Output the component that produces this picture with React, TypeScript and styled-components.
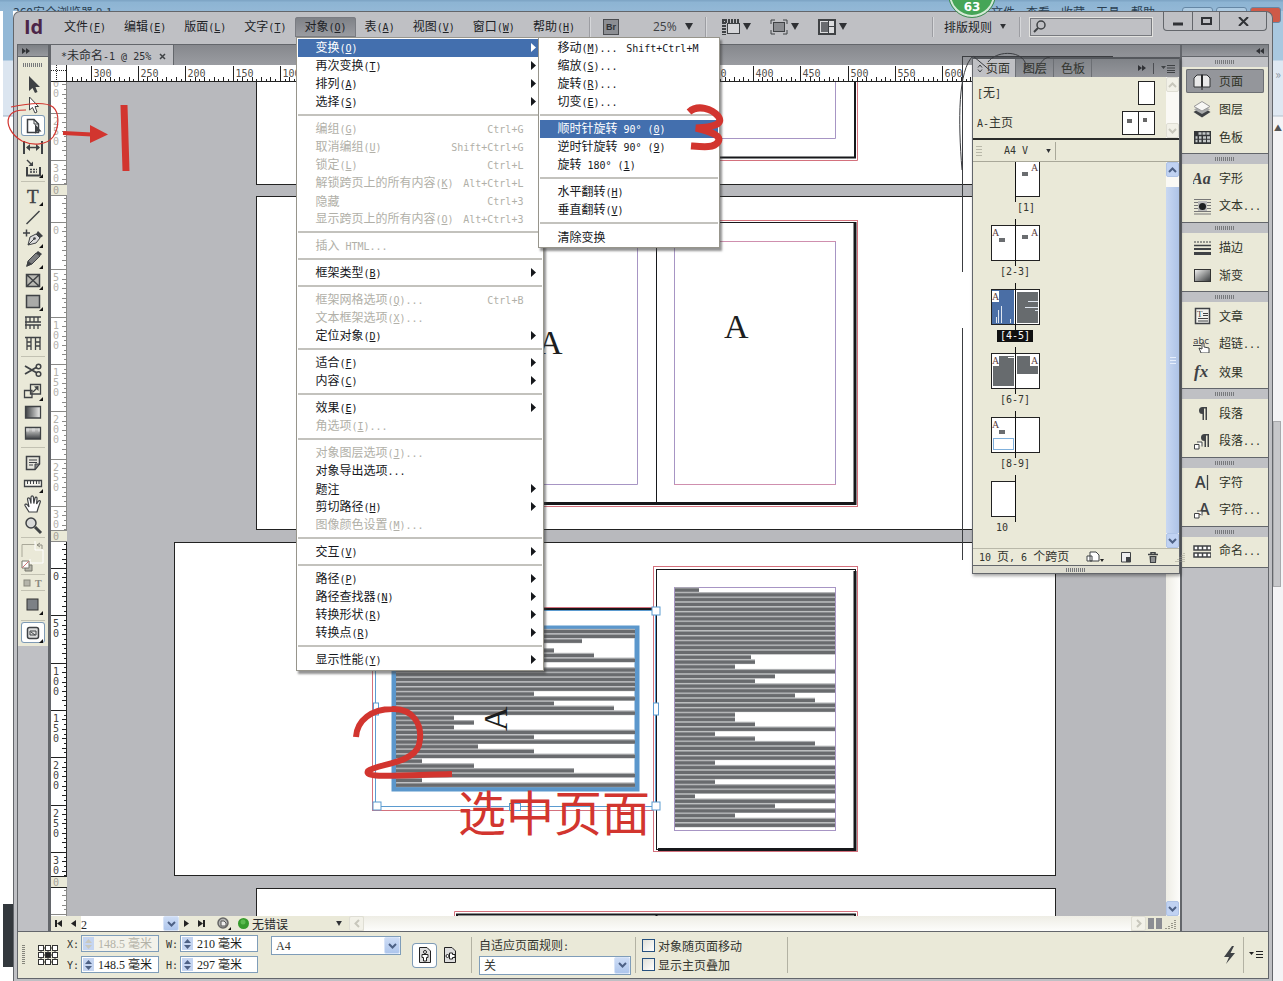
import React from "react";
import styled, { createGlobalStyle, css } from "styled-components";

const INK = "#26282b";
const FRAME = "#bfc0c4";
const CREAM = "#eae9d8";
const LINE = "#63666b";
const PASTE = "#b8b9bd";
const BLUE = "#436fae";
const RED = "#d2352f";
const MONO = '"DejaVu Sans Mono", "Liberation Mono", monospace';
const SANS = '"Noto Sans CJK SC", "Liberation Sans", sans-serif';
const FIELD = '"Liberation Serif", "Noto Sans CJK SC", serif';

const Global = createGlobalStyle`
  *, *::before, *::after { box-sizing: border-box; }
  body { margin: 0; background: #fff; color: ${INK}; font: 12px/18px ${SANS}; }
  button, input, select { font: inherit; color: inherit; margin: 0; padding: 0; border: 0; background: none; border-radius: 0; }
  svg { display: block; flex: none; }
`;

/* ---------- text ---------- */

const Latin = styled.span`
  font-family: ${MONO};
  font-size: 10px;
  white-space: pre;
`;
const Key = styled.u`
  text-underline-offset: 1px;
`;

function Mixed({ text, keys = false }: { text: string; keys?: boolean }) {
  return (
    <>
      {text.split(/([\x20-\x7e°]+)/).map((run, i) => {
        if (i % 2 === 0) return run;
        const m = keys ? run.match(/^(.*\()(.)(\).*)$/) : null;
        return <Latin key={i}>{m ? <>{m[1]}<Key>{m[2]}</Key>{m[3]}</> : run}</Latin>;
      })}
    </>
  );
}

/* ---------- window shell ---------- */

const Desktop = styled.div`
  position: relative;
  min-height: 100vh;
  display: flex;
  flex-direction: column;
  overflow: hidden;
`;
const BackTitle = styled.div`
  height: 11px;
  padding: 4px 128px 0 13px;
  display: flex;
  justify-content: space-between;
  background: linear-gradient(#7fa6c6 0 1px, #8db4d3 2px, #93b8d6);
  overflow: hidden;
  color: #2a3f52;
  line-height: 16px;
`;
const BackMenu = styled.div`
  display: flex;
  gap: 11px;
`;
const BackButtons = styled.div`
  position: absolute;
  top: 7px;
  right: 2px;
  display: flex;
  gap: 3px;
`;
const BackButton = styled.i<{ $close?: boolean }>`
  width: 31px;
  height: 16px;
  border: 1px solid #6587a5;
  border-radius: 3px;
  background: ${(p) => (p.$close ? "#cf5a48" : "#aecbe2")};
`;
const Middle = styled.div`
  flex: 1;
  display: flex;
`;
const EdgeLeft = styled.div`
  width: 13px;
  border-left: 3px solid #fff;
  display: flex;
  flex-direction: column;
  background: linear-gradient(#93b8d6 0 49px, #dbe5f0 50px 104px, #9eb1c5 105px, #fff 106px);
  justify-content: flex-end;
`;
const EdgeDark = styled.div`
  height: 63px;
  margin-bottom: 14px;
  background: #33383d;
`;
const EdgeRight = styled.div`
  width: 10px;
  display: flex;
  flex-direction: column;
  align-items: center;
  background: linear-gradient(#a9c8e0 0 49px, #dfe8f2 50px 104px, #b4c0cc 105px, #f4f4f6 106px);
  padding-top: 54px;
  color: #8c96a2;
`;
const EdgeMore = styled.span`
  height: 18px;
  margin-bottom: 36px;
`;
const EdgeArrow = styled.span`
  height: 18px;
  color: #555;
  font-size: 8px;
`;
const EdgeThumb = styled.span`
  width: 8px;
  height: 166px;
  margin-top: 284px;
  align-self: flex-start;
  border: 1px solid #a8a9ac;
  background: #c6c7ca;
`;
const Badge = styled.div`
  position: absolute;
  z-index: 9;
  left: 949px;
  top: -29px;
  width: 46px;
  height: 46px;
  padding-bottom: 1px;
  display: flex;
  align-items: flex-end;
  justify-content: center;
  border-radius: 50%;
  border: 2px solid #d5ead6;
  outline: 1px solid #3f8f52;
  background: #45a557;
  color: #fff;
  font: bold 12px/14px "DejaVu Sans", sans-serif;
`;
const Shell = styled.div`
  position: relative;
  flex: 1;
  min-width: 0;
  display: flex;
  flex-direction: column;
  padding: 0 3px 2px;
  border: 1px solid ${LINE};
  border-bottom: 0;
  border-radius: 7px 7px 0 0;
  background: ${FRAME};
`;

/* ---------- menu bar ---------- */

const MenuBar = styled.header`
  height: 32px;
  display: flex;
  align-items: center;
  padding-bottom: 3px;
  color: #202226;
`;
const Logo = styled.div`
  width: 38px;
  padding-left: 7px;
  color: #4c2548;
  font: bold 20px/20px "Open Sans", sans-serif;
`;
const MenuNav = styled.nav`
  display: flex;
  margin-right: 5px;
`;
const MenuSlot = styled.div`
  position: relative;
`;
const MenuTop = styled.button<{ $open?: boolean }>`
  height: 20px;
  padding: 0 9px;
  border-radius: 3px 3px 0 0;
  white-space: nowrap;
  ${(p) => p.$open && css`background: linear-gradient(#7d8086, #9b9da2); box-shadow: inset 0 0 0 1px #7a7c82;`}
`;
const BarRule = styled.i`
  width: 2px;
  height: 20px;
  border-left: 1px solid #9c9da2;
  border-right: 1px solid #d6d7da;
`;
const Tool = styled.button`
  display: flex;
  align-items: center;
  gap: 3px;
`;
const Zoom = styled(Tool)`
  margin: 0 12px 0 34px;
  gap: 8px;
  color: #3e4044;
  font: 12px/18px "Open Sans", sans-serif;
`;
const Bridge = styled.button`
  width: 16px;
  height: 16px;
  margin-left: 12px;
  border: 1px solid #4a4c50;
  background: #8c8e93;
  color: #303236;
  font: bold 9px/12px "Liberation Sans", sans-serif;
`;
const IconTools = styled.div`
  display: flex;
  gap: 19px;
  margin-left: 15px;
`;
const Spacer = styled.div`
  flex: 1;
`;
const Workspace = styled(Tool)`
  margin: 0 13px 0 10px;
  gap: 8px;
`;
const Search = styled.label`
  width: 122px;
  height: 18px;
  margin: 0 11px 0 9px;
  padding: 0 2px;
  display: flex;
  align-items: center;
  border: 1px solid #77797e;
  box-shadow: 0 0 0 1px #e2e2df;
  input { flex: 1; min-width: 0; outline: 0; }
`;
const WinButtons = styled.div`
  align-self: flex-start;
  display: flex;
  height: 19px;
  margin-right: 2px;
  border: 1px solid ${LINE};
  border-top: 0;
  border-radius: 0 0 4px 4px;
`;
const WinButton = styled.button<{ $w: number }>`
  width: ${(p) => p.$w}px;
  display: flex;
  align-items: center;
  justify-content: center;
  & + & { border-left: 1px solid ${LINE}; }
`;

/* ---------- drop-down menus ---------- */

const Popup = styled.div<{ $sub?: boolean }>`
  position: absolute;
  z-index: 5;
  top: ${(p) => (p.$sub ? "-2px" : "100%")};
  left: ${(p) => (p.$sub ? "240px" : "1px")};
  width: ${(p) => (p.$sub ? 182 : 248)}px;
  padding: 1px;
  border: 1px solid #97958c;
  background: #fff;
  box-shadow: 2px 3px 2px rgba(60, 60, 60, 0.55);
  color: #16181c;
`;
const Entry = styled.div`
  position: relative;
`;
const EntryButton = styled.button<{ $on?: boolean; $sub?: boolean }>`
  width: 100%;
  height: 18px;
  display: flex;
  align-items: center;
  padding-left: 17px;
  padding-right: ${(p) => (p.$sub ? 20 : 6)}px;
  text-align: left;
  white-space: nowrap;
  ${(p) => p.$on && css`background: ${BLUE}; color: #fff;`}
  &:disabled { color: #b1b0a8; }
`;
const Keys = styled.span<{ $flush?: boolean }>`
  margin-left: auto;
  margin-right: ${(p) => (p.$flush ? 0 : 13)}px;
`;
const MenuLine = styled.hr`
  height: 9px;
  margin: 0;
  border: 0;
  background: linear-gradient(#c3c2bd, #c3c2bd) 0 3px / 100% 2px no-repeat;
`;

type Item = { t: string; k?: string; sub?: boolean; off?: boolean; on?: boolean } | null;

const objectMenu: Item[] = [
  { t: "变换(O)", sub: true, on: true },
  { t: "再次变换(T)", sub: true },
  { t: "排列(A)", sub: true },
  { t: "选择(S)", sub: true },
  null,
  { t: "编组(G)", k: "Ctrl+G", off: true },
  { t: "取消编组(U)", k: "Shift+Ctrl+G", off: true },
  { t: "锁定(L)", k: "Ctrl+L", off: true },
  { t: "解锁跨页上的所有内容(K)", k: "Alt+Ctrl+L", off: true },
  { t: "隐藏", k: "Ctrl+3", off: true },
  { t: "显示跨页上的所有内容(O)", k: "Alt+Ctrl+3", off: true },
  null,
  { t: "插入 HTML...", off: true },
  null,
  { t: "框架类型(B)", sub: true },
  null,
  { t: "框架网格选项(Q)...", k: "Ctrl+B", off: true },
  { t: "文本框架选项(X)...", off: true },
  { t: "定位对象(D)", sub: true },
  null,
  { t: "适合(F)", sub: true },
  { t: "内容(C)", sub: true },
  null,
  { t: "效果(E)", sub: true },
  { t: "角选项(I)...", off: true },
  null,
  { t: "对象图层选项(J)...", off: true },
  { t: "对象导出选项..." },
  { t: "题注", sub: true },
  { t: "剪切路径(H)", sub: true },
  { t: "图像颜色设置(M)...", off: true },
  null,
  { t: "交互(V)", sub: true },
  null,
  { t: "路径(P)", sub: true },
  { t: "路径查找器(N)", sub: true },
  { t: "转换形状(R)", sub: true },
  { t: "转换点(R)", sub: true },
  null,
  { t: "显示性能(Y)", sub: true },
];
const transformMenu: Item[] = [
  { t: "移动(M)...", k: "Shift+Ctrl+M" },
  { t: "缩放(S)..." },
  { t: "旋转(R)..." },
  { t: "切变(E)..." },
  null,
  { t: "顺时针旋转 90° (0)", on: true },
  { t: "逆时针旋转 90° (9)" },
  { t: "旋转 180° (1)" },
  null,
  { t: "水平翻转(H)" },
  { t: "垂直翻转(V)" },
  null,
  { t: "清除变换" },
];

function Menu({ items, sub }: { items: Item[]; sub?: boolean }) {
  return (
    <Popup $sub={sub} role="menu">
      {items.map((it, i) =>
        it === null ? (
          <MenuLine key={i} />
        ) : (
          <Entry key={i}>
            <EntryButton role="menuitem" disabled={it.off} $on={it.on} $sub={sub}>
              <span><Mixed text={it.t} keys /></span>
              {it.k && <Keys $flush={sub}><Mixed text={it.k} /></Keys>}
              {it.sub && (
                <Keys $flush>
                  <svg width="5" height="9"><path d="M0 0L5 4.5L0 9Z" fill="currentColor" /></svg>
                </Keys>
              )}
            </EntryButton>
            {!sub && i === 0 && <Menu items={transformMenu} sub />}
          </Entry>
        )
      )}
    </Popup>
  );
}

/* ---------- small glyphs ---------- */

const Down = ({ w = 8 }: { w?: number }) => (
  <svg width={w} height={w - 1} viewBox="0 0 8 7"><path d="M0 0H8L4 7Z" fill="#2e3034" /></svg>
);
const Chevron = ({ up, c = "#4d6185" }: { up?: boolean; c?: string }) => (
  <svg width="9" height="6" viewBox="0 0 9 6"><path d={up ? "M1 5L4.500 1.500L8 5" : "M1 1L4.500 4.500L8 1"} fill="none" stroke={c} strokeWidth="2" /></svg>
);
const Grip = ({ w = 20 }: { w?: number }) => (
  <svg width={w} height="4"><path d={`M0 2H${w}`} stroke="#77797c" strokeWidth="4" strokeDasharray="1 1" /></svg>
);
const Twin = ({ left }: { left?: boolean }) => (
  <svg width="8" height="6" viewBox="0 0 8 6"><path d={left ? "M4 0V6L0 3ZM8 0V6L4 3Z" : "M0 0V6L4 3ZM4 0V6L8 3Z"} fill="#303236" /></svg>
);

/* ---------- tool box ---------- */

const Body = styled.div`
  flex: 1;
  display: flex;
  min-height: 0;
  border-top: 1px solid ${LINE};
`;
const Toolbox = styled.aside`
  width: 34px;
  border-left: 1px solid ${LINE};
  border-right: 3px solid ${LINE};
`;
const ColumnHead = styled.div<{ $right?: boolean }>`
  height: 12px;
  display: flex;
  align-items: center;
  justify-content: ${(p) => (p.$right ? "flex-end" : "flex-start")};
  padding: 0 4px;
  background: linear-gradient(#7d8085, #97999e);
  border-bottom: 1px solid ${LINE};
`;
const ToolList = styled.div`
  display: flex;
  flex-direction: column;
  align-items: center;
  padding-bottom: 3px;
  background: ${CREAM};
`;
const GripBox = styled.div`
  height: 16px;
  display: flex;
  align-items: center;
  justify-content: center;
`;
const ToolButton = styled.button<{ $on?: boolean; $h?: number }>`
  width: 24px;
  height: ${(p) => p.$h ?? 21}px;
  display: flex;
  align-items: center;
  justify-content: center;
  ${(p) => p.$on && css`background: #fff; box-shadow: inset 0 0 0 1px #7f9bb5; border-radius: 3px;`}
`;
const ToolRule = styled.i<{ $h: number }>`
  width: 24px;
  height: ${(p) => p.$h}px;
  background: linear-gradient(#c2c1b2, #c2c1b2) 0 50% / 100% 1px no-repeat;
`;

const S = "#3f4245";
const corner = <path d="M20 20V16L16 20Z" fill="#111" />;
const toolArt: Record<string, React.ReactNode> = {
  选择: <path d="M6 2V17L9.500 14L12 19L14.500 18L12.500 13H17Z" fill={S} />,
  直接选择: <path d="M6.500 2V15L9.500 12.500L12 18L14 17L12 11.500H15.500Z" fill="#fff" stroke={S} />,
  页面: <><path d="M4.500 3.500H11L15.500 8V16.500H4.500Z" fill="#fff" stroke={S} strokeWidth="1.500" /><path d="M11 3.500V8H15.500" fill="none" stroke={S} /><path d="M12 8V18L14 15.500H18.500Z" fill={S} /></>,
  间隙: <><path d="M1 4V17M19 4V17" stroke={S} strokeWidth="2" /><path d="M4 10.500H16" stroke={S} strokeWidth="1.500" /><path d="M3 10.500L7 7V14ZM17 10.500L13 7V14Z" fill={S} /></>,
  内容收集器: <><path d="M4 9V17.500H17V9" fill="none" stroke={S} strokeWidth="2" /><path d="M4 2L8 6" stroke={S} strokeWidth="1.500" /><path d="M10 8V3.500L5.500 8Z" fill={S} /><path d="M7 11.500H14M7 14H14" stroke={S} strokeWidth="1.500" strokeDasharray="2 1" />{corner}</>,
  文字: <><text x="4" y="17" fontFamily="Liberation Serif, serif" fontSize="19" fill={S} stroke={S} strokeWidth="0.400">T</text>{corner}</>,
  直线: <path d="M3.500 17L16.500 4" stroke={S} strokeWidth="1.500" />,
  钢笔: <><path d="M0 5H7M3.500 1.500V8.500" stroke={S} strokeWidth="1.500" /><path d="M5 17L7 9L13 6L17 10L13 15Z" fill="#ddd" stroke={S} /><path d="M13 6L15 3L20 8L17 10Z" fill={S} /><path d="M5 17L11 11" stroke={S} /><circle cx="11.500" cy="10.500" r="1.300" fill={S} />{corner}</>,
  铅笔: <><path d="M5 12L13 4L17 7L9 15L4 17Z" fill="#7b7d7f" stroke={S} /><path d="M3 18L5 12L9 15Z" fill={S} /><path d="M13 4L15 2L19 5L17 7Z" fill={S} />{corner}</>,
  矩形框架: <><path d="M3.500 4.500H16.500V16.500H3.500ZM3.500 4.500L16.500 16.500M16.500 4.500L3.500 16.500" fill="#b9b9b3" stroke={S} strokeWidth="1.500" />{corner}</>,
  矩形: <><path d="M3.500 4.500H16.500V16.500H3.500Z" fill="#a9aaa8" stroke={S} strokeWidth="1.500" />{corner}</>,
  水平网格: <path d="M2 5H18M2 10H18M3 5V10M7 5V10M11 5V10M15 5V10M2 13H18M3 10V17M7 13V17M11 13V17M15 13V17" stroke={S} strokeWidth="1.300" />,
  垂直网格: <path d="M2 4.500H18M4 4V17M8 4V17M12.500 4V17M17 4V17M4 9H8M4 13H8M12.500 9H17M12.500 13H17" stroke={S} strokeWidth="1.300" />,
  剪刀: <><path d="M2 6L14 13M2 14L14 7" stroke={S} strokeWidth="1.800" /><circle cx="15.500" cy="6.500" r="2.300" fill="none" stroke={S} strokeWidth="1.500" /><circle cx="15.500" cy="14" r="2.300" fill="none" stroke={S} strokeWidth="1.500" /></>,
  自由变换: <><path d="M1.500 9.500H9V16.500H1.500ZM7.500 3.500H17.500V13H7.500Z" fill="none" stroke={S} strokeWidth="1.300" /><path d="M10 11L14 7" stroke={S} strokeWidth="1.300" /><path d="M15.500 5V10L11 5.500Z" fill={S} />{corner}</>,
  渐变色板: <path d="M2.500 4.500H17.500V16H2.500Z" fill="url(#gh)" stroke={S} strokeWidth="1.300" />,
  渐变羽化: <><path d="M2.500 4.500H17.500V16H2.500Z" fill="url(#gv)" stroke={S} strokeWidth="1.300" /><path d="M3 7H17" stroke="#ddd" strokeWidth="3" strokeDasharray="3 3" opacity="0.600" /></>,
  附注: <><path d="M3.500 4.500H16.500V12L12 17.500H3.500Z" fill="#e6e5dc" stroke={S} strokeWidth="1.500" /><path d="M6 8H14M6 10.500H14M6 13H10" stroke={S} /><path d="M16.500 12H12V17.500Z" fill="#888" stroke={S} /></>,
  度量: <><path d="M1.500 7.500H18.500V13.500H1.500Z" fill="#f5f4ee" stroke={S} strokeWidth="1.300" /><path d="M4.500 8V11M7.500 8V11M10.500 8V11M13.500 8V11M16 8V11" stroke={S} />{corner}</>,
  抓手: <path d="M6 18L2 11.500C1.500 10 3.500 9.500 4.500 11L6 13L4.500 5C4.500 3.500 6.500 3.500 7 5L8 9.500V3C8.300 1.500 10 1.500 10.400 3L10.800 9.500L12 4C12.500 2.700 14.200 3 14 4.500L13.600 10L15.500 7C16.500 6 17.800 7 17.200 8.200L15 14.500L14 18Z" fill="#fff" stroke={S} strokeWidth="1.200" />,
  缩放: <><circle cx="8" cy="8" r="5" fill="#d9dad8" stroke={S} strokeWidth="1.500" /><path d="M12 12L18 18" stroke={S} strokeWidth="3" /></>,
};
function ToolIcon({ name }: { name: string }) {
  return (
    <ToolButton aria-label={name} $on={name === "页面"}>
      <svg width="20" height="20">{toolArt[name]}</svg>
    </ToolButton>
  );
}
const toolGroups = [
  { tools: ["选择", "直接选择", "页面", "间隙", "内容收集器"], rule: 7 },
  { tools: ["文字", "直线", "钢笔", "铅笔", "矩形框架", "矩形", "水平网格", "垂直网格"], rule: 6 },
  { tools: ["剪刀", "自由变换", "渐变色板", "渐变羽化"], rule: 8 },
  { tools: ["附注", "度量", "抓手", "缩放"], rule: 4 },
];

/* ---------- document ---------- */

const Doc = styled.main`
  position: relative;
  flex: 1;
  min-width: 0;
  display: flex;
  flex-direction: column;
  border-right: 2px solid ${LINE};
`;
const TabStrip = styled.div`
  height: 20px;
  display: flex;
  background: linear-gradient(#86888d, #9a9ca1);
`;
const DocTab = styled.button`
  padding: 2px 7px 0 10px;
  display: flex;
  align-items: center;
  gap: 8px;
  background: ${FRAME};
  border-right: 1px solid ${LINE};
  color: #2c2e32;
`;
const RulerRow = styled.div`
  height: 17px;
  overflow: hidden;
  background: #fff;
  border-bottom: 1px solid #222;
`;
const CanvasRow = styled.div`
  flex: 1;
  min-height: 0;
  display: flex;
`;
const Canvas = styled.div`
  flex: 1;
  min-width: 0;
  overflow: hidden;
  background: ${PASTE};
`;
const VScroll = styled.div`
  width: 14px;
  display: flex;
  flex-direction: column;
  justify-content: flex-end;
  background: linear-gradient(90deg, #eeede5, #fdfdfb);
`;
const ScrollButton = styled.button<{ $off?: boolean; $w?: number }>`
  width: ${(p) => p.$w ?? 13}px;
  height: 15px;
  display: flex;
  align-items: center;
  justify-content: center;
  border: 1px solid ${(p) => (p.$off ? "#dfded4" : "#b0c4e6")};
  border-radius: 2px;
  background: ${(p) => (p.$off ? "#f2f1e8" : "#c0d2f2")};
`;

const U = 47.3;
function TopRuler() {
  const ticks: string[] = [];
  const labels: { x: number; v: number }[] = [];
  for (let i = -64; i <= 170; i++) {
    const x = Math.round(374.5 + (i * U) / 10 - 51) + 0.5;
    if (x < 17) continue;
    const h = i % 10 === 0 ? 16 : i % 2 === 0 ? 5 : 3;
    ticks.push(`M${x} 17v-${h}`);
    if (i % 10 === 0) labels.push({ x: x + 2, v: Math.abs(i * 5) });
  }
  return (
    <svg width="1129" height="17">
      <path d={ticks.join("")} stroke="#222" />
      <path d="M0 5.500H15M5.500 0V17" stroke="#222" strokeDasharray="1 1" />
      <path d="M15.500 0V17" stroke="#222" />
      {labels.map((l) => (
        <text key={l.x} x={l.x} y="12" fontFamily={MONO} fontSize="10" fill="#55504c">{l.v}</text>
      ))}
    </svg>
  );
}
function SideRuler() {
  const spreads = [
    { from: 60, to: 184, zero: -124, on: false },
    { from: 196, to: 530, zero: 222, on: false },
    { from: 542, to: 876, zero: 568, on: true },
    { from: 888, to: 920, zero: 914, on: false },
  ];
  return (
    <svg width="16" height="834" viewBox="51 82 16 834">
      <rect x="51" y="82" width="16" height="834" fill="#fff" />
      {spreads.map((s) => {
        const c = s.on ? "#222" : "#8a8a88";
        const out: React.ReactNode[] = [];
        for (let i = -5; i < 70; i++) {
          const y = Math.round(s.zero + (i * U) / 10) + 0.5;
          if (y < s.from || y > s.to) continue;
          out.push(<path key={i} d={`M67 ${y}h-${i % 10 === 0 ? 16 : i % 2 === 0 ? 5 : 3}`} stroke={c} />);
          if (i % 10 === 0 && i >= 0)
            String(i * 5).split("").forEach((d, k) => {
              const ty = y + 11 + k * 10;
              if (ty < s.to) out.push(<text key={`${i}-${k}`} x="53" y={ty} fontFamily={MONO} fontSize="10" fill={s.on ? "#444" : "#b4b2ac"}>{d}</text>);
            });
        }
        return (
          <g key={s.from}>
            {out}
            <rect x="51" y={s.to} width="16" height="12" fill={CREAM} />
            <path d={`M51 ${s.to + 0.5}H67M51 ${s.to + 11.5}H67`} stroke={c} />
            <text x="53" y={s.to + 10} fontFamily={MONO} fontSize="10" fill="#a5a298">0</text>
            <path d={`M66.500 ${s.from}V${s.to}`} stroke={c} />
          </g>
        );
      })}
    </svg>
  );
}

const F = -1;
const rightLines = [24, F, F, F, F, F, F, F, F, F, F, F, F, F, 76, 80, 60, F, 100, 80, F, F, 120, 140, F, F, 60, 60, 80, F, 40, 80, 140, F, F, F, 40, F, F, F, 40, F, F, 20, F, 100, F, 60, F, F];
const leftLines = [F, F, 186, 0, 158, 198, F, 0, F, F, F, F, F, 138, F, 158, 218, F, 58, 78, 58, F, 138, F, 82, 138, F, 26, 78, 178, F, 26, F];

function Greek({ x, y, full, lines }: { x: number; y: number; full: number; lines: number[] }) {
  return (
    <g>
      {lines.map((w, i) => {
        const wide = w === F ? full : w;
        const top = y + i * 4.8;
        return wide ? (
          <g key={i}>
            <rect x={x} y={top - 1.2} width={wide} height="4.800" fill="#adafb1" />
            <rect x={x} y={top} width={wide} height="3.200" fill="#696b6e" />
          </g>
        ) : null;
      })}
    </g>
  );
}
const Handle = ({ x, y, w = 8, h = 8 }: { x: number; y: number; w?: number; h?: number }) => (
  <rect x={x - w / 2} y={y - h / 2} width={w} height={h} fill="#fff" stroke="#5b9bd0" />
);

function Spreads() {
  const black = "#17181b";
  const pink = "#d4717d";
  const violet = "#a795c4";
  return (
    <svg width="1099" height="834" viewBox="67 82 1099 834">
      <g fill="#fff" stroke="#222">
        <rect x="256.500" y="60" width="799" height="124.500" />
        <rect x="256.500" y="196.500" width="799" height="333" />
        <rect x="174.500" y="542.500" width="881" height="333" />
        <rect x="256.500" y="888.500" width="799" height="60" />
      </g>
      <g fill="none">
        <path d="M454 160.500H857.500V60" stroke={pink} />
        <path d="M457 157.500H855V60" stroke={black} strokeWidth="2" />
        <path d="M475 138.500H637.500V60M674 60V138.500H835.500V60" stroke={violet} />
        <rect x="454.500" y="220.500" width="403" height="286" stroke={pink} />
        <path d="M457 222.500H855V504" stroke={black} />
        <path d="M457 503.500H855V222" stroke={black} strokeWidth="3" />
        <path d="M656.500 222V504" stroke={black} />
        <path d="M637.500 241V484.500H475M674.500 241V484M835.500 241V484" stroke={violet} />
        <path d="M475 241.500H637M674 241.500H836M674 484.500H836" stroke="#cf8fae" />
        <rect x="653.500" y="566.500" width="204" height="285" stroke={pink} />
        <path d="M372.500 810.500V607.500H656M372 810.500H654" stroke={pink} />
      </g>
      <rect x="656.500" y="569.500" width="199" height="280" fill="#fff" stroke={black} />
      <path d="M658 849.500H855V571" fill="none" stroke={black} strokeWidth="3" />
      <path d="M376 609H656" stroke={black} strokeWidth="2" />
      <rect x="674.500" y="587.500" width="161" height="243" fill="none" stroke={violet} />
      <Greek x={675} y={588.5} full={160} lines={rightLines} />
      <rect x="394" y="628" width="243" height="161" fill="#fff" stroke="#5b97cc" strokeWidth="5" />
      <Greek x={396} y={630} full={239} lines={leftLines} />
      <rect x="375.500" y="610.500" width="280" height="196" fill="none" stroke="#5b9bd0" />
      <Handle x={656} y={611} /><Handle x={377} y={806} /><Handle x={656} y={806} />
      <Handle x={376} y={709} w={5} h={12} /><Handle x={656} y={709} w={5} h={12} /><Handle x={515} y={807} w={11} h={7} />
      <g fontFamily="Liberation Serif, serif" fontSize="34" fill="#1d1e20">
        <text x="724" y="338">A</text>
        <text x="538" y="354">A</text>
        <text transform="translate(507 731) rotate(-90)">A</text>
      </g>
      <path d="M454.500 920V911.500H857.500V920" fill="none" stroke={pink} />
      <path d="M457 920V914.500H855V920M656.500 914V920" fill="none" stroke={black} strokeWidth="2" />
    </svg>
  );
}

const Status = styled.footer`
  height: 15px;
  display: flex;
  align-items: center;
  background: ${CREAM};
`;
const Nav = styled.button<{ $w?: number }>`
  width: ${(p) => p.$w ?? 15}px;
  height: 15px;
  display: flex;
  align-items: center;
  justify-content: center;
`;
const SelectBox = styled.label<{ $w: number; $h: number; $plain?: boolean }>`
  width: ${(p) => p.$w}px;
  height: ${(p) => p.$h}px;
  display: flex;
  align-items: center;
  border: ${(p) => (p.$plain ? "0" : "1px solid #7f9db9")};
  background: #fff;
  select { flex: 1; min-width: 0; height: 100%; padding-left: ${(p) => (p.$plain ? 0 : 4)}px; appearance: none; outline: 0; font-family: ${FIELD}; }
`;
const ArrowChip = styled.span`
  width: 16px;
  align-self: stretch;
  display: flex;
  align-items: center;
  justify-content: center;
  border: 1px solid #d8e4f8;
  border-radius: 2px;
  background: linear-gradient(#cddcf5, #aec6ec);
`;
function Select({ w, h, value, label, plain }: { w: number; h: number; value: string; label: string; plain?: boolean }) {
  return (
    <SelectBox $w={w} $h={h} $plain={plain}>
      <select aria-label={label}><option>{value}</option></select>
      <ArrowChip><Chevron /></ArrowChip>
    </SelectBox>
  );
}
const Preflight = styled.button`
  display: flex;
  align-items: center;
  gap: 3px;
  width: 104px;
  margin-right: 7px;
  span { flex: 1; text-align: left; }
`;
const HTrack = styled.div`
  flex: 1;
  align-self: stretch;
  background: linear-gradient(#eeede5, #fdfdfb);
`;

/* ---------- pages panel ---------- */

const PagesPanel = styled.section`
  position: absolute;
  top: 12px;
  right: 0;
  width: 208px;
  display: flex;
  flex-direction: column;
  border: 1px solid ${LINE};
  border-top: 2px solid #55585d;
  background: ${CREAM};
  box-shadow: 1px 2px 3px rgba(0, 0, 0, 0.35);
  color: #33352f;
`;
const PanelTabs = styled.div`
  height: 18px;
  display: flex;
  align-items: center;
  background: linear-gradient(#808388, #94969b);
`;
const PanelTab = styled.button<{ $on?: boolean }>`
  height: 18px;
  padding: 0 6px 0 7px;
  display: flex;
  align-items: center;
  gap: 3px;
  border-right: 1px solid #6c6f74;
  ${(p) => p.$on && css`padding: 0 5px 0 4px; background: ${FRAME};`}
`;
const TabTools = styled.div`
  margin-left: auto;
  padding-right: 4px;
  display: flex;
  align-items: center;
  gap: 7px;
`;
const TinyRule = styled.i`
  width: 1px;
  height: 11px;
  background: #4b4d52;
`;
const ScrollRow = styled.div`
  display: flex;
`;
const Masters = styled.div`
  flex: 1;
  padding: 1px 11px 0 4px;
`;
const MasterRow = styled.div`
  height: 30px;
  display: flex;
  align-items: center;
  justify-content: space-between;
`;
const PanelScroll = styled.div`
  width: 13px;
  display: flex;
  flex-direction: column;
  justify-content: space-between;
  background: #faf9f5;
`;
const Thumb = styled.div`
  flex: 1;
  margin: 10px 0 0;
  display: flex;
  align-items: center;
  justify-content: center;
  background: linear-gradient(90deg, #c9d8f2, #aec3e6);
`;
const SizeBar = styled.div`
  height: 24px;
  padding: 3px 0 2px 3px;
  display: flex;
  align-items: center;
  border-top: 2px solid #2b2c2a;
  border-bottom: 1px solid #a9a899;
`;
const SizeButton = styled.button`
  width: 74px;
  height: 18px;
  padding: 0 4px 0 22px;
  display: flex;
  align-items: center;
  justify-content: space-between;
  border-right: 1px solid #a9a899;
`;
const PageList = styled.div`
  flex: 1;
  height: 386px;
  padding-left: 17px;
`;
const PageBlock = styled.div<{ $first?: boolean }>`
  height: ${(p) => (p.$first ? 57 : 64)}px;
  width: 52px;
`;
const PageLabel = styled.div<{ $side: string; $on?: boolean }>`
  width: 36px;
  height: 12px;
  margin-left: ${(p) => (p.$side === "right" ? 18 : p.$side === "left" ? -6 : 7)}px;
  text-align: center;
  font: 10px/12px ${MONO};
  ${(p) => p.$on && css`background: #111; color: #fff;`}
`;
const PanelFoot = styled.div`
  height: 17px;
  padding: 0 2px 0 6px;
  display: flex;
  align-items: center;
  border-top: 1px solid #b9b8a9;
  gap: 17px;
  span { flex: 1; white-space: nowrap; }
`;
const PanelBase = styled.div`
  height: 8px;
  display: flex;
  align-items: center;
  justify-content: center;
  border-top: 1px solid ${LINE};
  background: #dddcd0;
`;

const pageA = (x: number, y: number) => (
  <><rect x={x - 1} y={y - 9} width="8" height="11" fill="#fff" /><text x={x} y={y} fontFamily="Liberation Serif, serif" fontSize="10" fill="#5b4040">A</text></>
);
const bit = (x: number, y: number) => <rect x={x} y={y} width="6" height="4" fill="#6a6d70" />;
const sheet = <rect x="1.500" y="6.500" width="48" height="35" fill="#fff" />;
const edge = <rect x="1.500" y="6.500" width="48" height="35" fill="none" stroke="#222" />;
const pageBlocks: { label: string; side: string; art: React.ReactNode }[] = [
  { label: "[1]", side: "right", art: <><rect x="25.500" y="0" width="24" height="41.500" fill="#fff" stroke="#222" />{pageA(41, 16)}{bit(32, 17)}<path d="M49.500 0V42" stroke="#222" /></> },
  { label: "[2-3]", side: "mid", art: <>{sheet}{pageA(2, 17)}{pageA(41, 17)}{bit(9, 19)}{bit(32, 16)}{edge}</> },
  { label: "[4-5]", side: "mid", art: <>{sheet}<rect x="2" y="7" width="22" height="34" fill="#4a6ea5" /><rect x="27" y="9" width="21" height="31" fill="#676b6e" />{pageA(2, 17)}<path d="M6.500 40V34M8.500 40V27M11.500 40V23M20.500 40V36M38 18.500H48M35 24.500H48M45 27.500H48" stroke="#dfe6f0" />{edge}</> },
  { label: "[6-7]", side: "mid", art: <>{sheet}<rect x="3" y="9" width="21" height="30" fill="#676b6e" /><rect x="27" y="9" width="21" height="18" fill="#676b6e" /><path d="M18 10.500H24" stroke="#fff" />{pageA(2, 17)}{pageA(41, 17)}{edge}</> },
  { label: "[8-9]", side: "mid", art: <>{sheet}{pageA(2, 17)}{bit(9, 19)}<rect x="3.500" y="27.500" width="20" height="11" fill="#fff" stroke="#7fb0dc" />{edge}</> },
  { label: "10", side: "left", art: <rect x="1.500" y="6.500" width="24" height="35" fill="#fff" stroke="#222" /> },
];

/* ---------- dock ---------- */

const Dock = styled.aside`
  width: 87px;
  border-right: 1px solid ${LINE};
`;
const DockGroup = styled.div`
  display: flex;
  flex-direction: column;
  padding-bottom: 2px;
  border-bottom: 1px solid ${LINE};
  background: ${CREAM};
`;
const DockGrip = styled.div`
  height: 10px;
  display: flex;
  align-items: center;
  justify-content: center;
  background: ${FRAME};
`;
const DockItem = styled.button<{ $on?: boolean }>`
  width: 78px;
  height: 24px;
  margin: 2px 4px;
  padding: 0 0 0 7px;
  display: flex;
  align-items: center;
  gap: 8px;
  white-space: nowrap;
  color: #303328;
  ${(p) => p.$on && css`background: #94969b; box-shadow: inset 0 0 0 1px #6c6f74; border-radius: 2px;`}
`;
const T = ({ children, ...p }: React.SVGProps<SVGTextElement>) => <text fill={S} {...p}>{children}</text>;
const mini = <path d="M1.500 12.500H6V17H1.500ZM4 10H9V14.500" fill="#fff" stroke={S} />;
const dock: { t: string; art: React.ReactNode }[][] = [
  [
    { t: "页面", art: <><path d="M1 6L4 3H8.500V15H1ZM17 6L14 3H9.500V15H17Z" fill="#e9e9e9" stroke="#303234" /><path d="M9 2V18" stroke="#222" /></> },
    { t: "图层", art: <><path d="M9 7L17.500 12L9 17.500L0.500 12Z" fill={S} /><path d="M9 4.500L17 9.500L9 14L1 9.500Z" fill="#a8aaab" /><path d="M9 1.500L17 6.500L9 11L1 6.500Z" fill="#f7f7f5" stroke="#999" /></> },
    { t: "色板", art: <><rect x="1" y="3" width="17" height="13" fill="#333638" /><path d="M5.500 5.500H8.500M9.500 5.500H16.500M2.500 9.500H4.500M6 9.500H8.500M10 9.500H17M2.500 13H4.500M6 13H8.500M10 13H17" stroke="#c4c8c8" strokeWidth="2.500" strokeDasharray="3 1" /></> },
  ],
  [
    { t: "字形", art: <T x="-1" y="15" fontFamily="Liberation Serif, serif" fontStyle="italic" fontWeight="bold" fontSize="16">Aa</T> },
    { t: "文本...", art: <><path d="M1 2.500H18M1 5.500H18M1 8.500H18M1 11.500H18M1 14.500H18M1 17H18" stroke="#777" /><rect x="5" y="4" width="9" height="10" fill="#bbb" /><circle cx="9.500" cy="9.500" r="3.500" fill="#1d1f20" /></> },
  ],
  [
    { t: "描边", art: <><path d="M1 4H18" stroke={S} strokeDasharray="2 1" /><path d="M1 7.500H18" stroke={S} strokeWidth="1.500" /><path d="M1 11H18" stroke={S} strokeWidth="2" /><path d="M1 15.500H18" stroke={S} strokeWidth="3" /></> },
    { t: "渐变", art: <rect x="1.500" y="3.500" width="16" height="12" fill="url(#gd)" stroke="#333" /> },
  ],
  [
    { t: "文章", art: <><rect x="2.500" y="1.500" width="14" height="15" fill="#f2f2ee" stroke={S} strokeWidth="1.500" /><T x="4" y="10" fontFamily="Liberation Serif, serif" fontSize="9">T</T><path d="M10 6.500H15M10 8.500H15M5 11.500H15M5 14H15" stroke={S} /></> },
    { t: "超链...", art: <><T x="0" y="9" fontFamily="DejaVu Sans, sans-serif" fontSize="9">abc</T><path d="M0 10.500H8" stroke={S} /><path d="M8 18L6 13L9 14V8L11 8V12L16 13V18Z" fill="#fff" stroke={S} /></> },
    { t: "效果", art: <T x="1" y="14" fontFamily="Liberation Serif, serif" fontStyle="italic" fontWeight="bold" fontSize="17">fx</T> },
  ],
  [
    { t: "段落", art: <path d="M10 3H14V16H12.500V4.500H11V16H9.500V10A3.500 3.500 0 0 1 9.500 3Z" fill={S} /> },
    { t: "段落...", art: <><path d="M12 2H16V15H14.500V3.500H13V15H11.500V9A3.500 3.500 0 0 1 11.500 2Z" fill={S} />{mini}</> },
  ],
  [
    { t: "字符", art: <><T x="2" y="15" fontFamily="Open Sans, sans-serif" fontWeight="600" fontSize="16">A</T><path d="M14.500 2V17" stroke={S} strokeWidth="1.300" /></> },
    { t: "字符...", art: <><T x="6" y="14" fontFamily="Open Sans, sans-serif" fontWeight="600" fontSize="16">A</T>{mini}</> },
  ],
  [{ t: "命名...", art: <path d="M1 4H18V8H1ZM1 11H18V15H1ZM5 4V8M9.500 4V8M14 4V8M5 11V15M9.500 11V15M14 11V15" fill="#fff" stroke={S} strokeWidth="1.500" /> }],
];

/* ---------- control panel ---------- */

const Control = styled.section`
  height: 48px;
  display: flex;
  align-items: center;
  border: 1px solid ${LINE};
  background: ${CREAM};
  color: #33352f;
`;
const Pairs = styled.div`
  display: grid;
  grid-template-columns: 14px 78px;
  grid-auto-rows: 17px;
  row-gap: 4px;
  margin-right: 7px;
  align-self: flex-start;
  margin-top: 3px;
  line-height: 16px;
`;
const Field = styled.div<{ $off?: boolean }>`
  height: 17px;
  display: flex;
  align-items: center;
  padding: 1px;
  border: 1px solid #7f9db9;
  background: ${(p) => (p.$off ? "#f3f2ea" : "#fff")};
  color: ${(p) => (p.$off ? "#b3b2a8" : "#1d1f1c")};
  input { flex: 1; min-width: 0; height: 15px; padding-left: 4px; outline: 0; font-family: ${FIELD}; }
`;
const Step = styled.span`
  width: 11px;
  height: 13px;
  display: flex;
  flex-direction: column;
  align-items: center;
  justify-content: space-around;
  background: #c5d5f1;
`;
const PanelRule = styled.i<{ $gap?: boolean }>`
  width: 1px;
  height: 36px;
  margin-left: ${(p) => (p.$gap ? 9 : 0)}px;
  background: #b3b2a3;
`;
const Orient = styled.button<{ $on?: boolean }>`
  width: 25px;
  height: 25px;
  display: flex;
  align-items: center;
  justify-content: center;
  ${(p) => p.$on && css`background: #fff; box-shadow: inset 0 0 0 1px #7f9bb5; border-radius: 4px;`}
`;
const Rules = styled.div`
  width: 163px;
  padding-left: 7px;
  display: flex;
  flex-direction: column;
`;
const Checks = styled.div`
  width: 151px;
  padding-left: 6px;
  display: flex;
  flex-direction: column;
  gap: 1px;
`;
const Check = styled.label`
  display: flex;
  align-items: center;
  gap: 3px;
  white-space: nowrap;
  input { appearance: none; width: 13px; height: 13px; border: 1px solid #27517f; background: linear-gradient(135deg, #e0e0d8, #fff); }
`;
const TopSelect = styled.div`
  align-self: flex-start;
  margin: 4px 11px 0 6px;
`;

function NumField({ id, label, value, off }: { id: string; label: string; value: string; off?: boolean }) {
  return (
    <>
      <label htmlFor={id}><Latin>{label}</Latin></label>
      <Field $off={off}>
        <Step>
          <svg width="7" height="10" viewBox="0 0 7 10"><path d="M3.500 0L7 4H0ZM3.500 10L7 6H0Z" fill={off ? "#c9c8bd" : "#4d6185"} /></svg>
        </Step>
        <input id={id} defaultValue={value} disabled={off} />
      </Field>
    </>
  );
}

/* ---------- hand-drawn notes ---------- */

const Notes = styled.svg`
  position: absolute;
  z-index: 8;
  top: 0;
  left: 0;
  pointer-events: none;
`;

export default function App() {
  return (
    <Desktop>
      <Global />
      <BackTitle>
        <span>360安全浏览器 8.1</span>
        <BackMenu><span>文件</span><span>查看</span><span>收藏</span><span>工具</span><span>帮助</span></BackMenu>
      </BackTitle>
      <BackButtons><BackButton /><BackButton /><BackButton $close /></BackButtons>
      <Middle>
        <EdgeLeft><EdgeDark /></EdgeLeft>
        <Shell>
          <MenuBar>
            <Logo>Id</Logo>
            <MenuNav>
              {["文件(F)", "编辑(E)", "版面(L)", "文字(T)", "对象(O)", "表(A)", "视图(V)", "窗口(W)", "帮助(H)"].map((m, i) => (
                <MenuSlot key={m}>
                  <MenuTop $open={i === 4}><Mixed text={m} keys /></MenuTop>
                  {i === 4 && <Menu items={objectMenu} />}
                </MenuSlot>
              ))}
            </MenuNav>
            <BarRule />
            <Bridge>Br</Bridge>
            <Zoom>25% <Down /></Zoom>
            <BarRule />
            <IconTools>
              <Tool aria-label="视图选项"><svg width="18" height="16"><path d="M0 2H18M2 0V16" stroke={S} strokeWidth="4" strokeDasharray="2 1" /><rect x="5.500" y="4.500" width="12" height="10" fill="#d5d6d9" stroke={S} /></svg><Down /></Tool>
              <Tool aria-label="屏幕模式"><svg width="18" height="16"><path d="M1 5V1H5M13 1H17V5M17 11V15H13M5 15H1V11" fill="none" stroke={S} /><rect x="3.500" y="3.500" width="11" height="9" fill="#8a8c90" stroke={S} /></svg><Down /></Tool>
              <Tool aria-label="排列文档"><svg width="18" height="16"><rect x="1" y="1" width="16" height="14" fill="#dcdddf" stroke={S} strokeWidth="2" /><rect x="3" y="3" width="7" height="10" fill="#696b6f" /><path d="M10.500 2V14M11 7.500H16" stroke={S} /></svg><Down /></Tool>
            </IconTools>
            <Spacer />
            <BarRule />
            <Workspace>排版规则 <Down w={6} /></Workspace>
            <BarRule />
            <Search>
              <svg width="13" height="13"><circle cx="8" cy="5" r="4" fill="none" stroke={S} strokeWidth="1.500" /><path d="M5 8L1 12" stroke={S} strokeWidth="2" /></svg>
              <input aria-label="搜索" />
            </Search>
            <WinButtons>
              <WinButton $w={28} aria-label="最小化"><svg width="10" height="10"><path d="M0 8H10" stroke="#303236" strokeWidth="3" /></svg></WinButton>
              <WinButton $w={27} aria-label="还原"><svg width="11" height="8"><rect x="1" y="1" width="9" height="6" fill="none" stroke="#303236" strokeWidth="2" /></svg></WinButton>
              <WinButton $w={47} aria-label="关闭"><svg width="11" height="9"><path d="M1 0L10 9M10 0L1 9" stroke="#303236" strokeWidth="2" /></svg></WinButton>
            </WinButtons>
          </MenuBar>

          <Body>
            <Toolbox>
              <ColumnHead><Twin /></ColumnHead>
              <ToolList>
                <GripBox><Grip /></GripBox>
                {toolGroups.map((g) => (
                  <React.Fragment key={g.rule}>
                    {g.tools.map((t) => <ToolIcon key={t} name={t} />)}
                    <ToolRule $h={g.rule} />
                  </React.Fragment>
                ))}
                <ToolButton $h={34} aria-label="填色和描边">
                  <svg width="24" height="34"><path d="M14 5.500H1V18" fill="none" stroke="#a9a899" /><path d="M9 20V24M9 24H22V11H14V2" fill="none" stroke="#fff" /><path d="M16 6H21V10M19 4L16 6L19 8" fill="none" stroke="#8e8d82" /><path d="M4 26H11V32H4Z" fill="#b6b5aa" stroke="#77766d" /><path d="M1 22H8V29H1Z" fill="#fff" stroke="#77766d" /><path d="M1 29L8 22" stroke="#c77" /></svg>
                </ToolButton>
                <ToolRule $h={3} />
                <ToolButton $h={13} aria-label="格式针对容器">
                  <svg width="20" height="12"><rect x="1" y="3" width="6" height="6" fill="#b5b4aa" stroke="#88877d" /><text x="12" y="10" fontFamily="Liberation Serif, serif" fontSize="10" fontWeight="bold" fill="#88877d">T</text></svg>
                </ToolButton>
                <ToolRule $h={3} />
                <ToolButton $h={26} aria-label="应用颜色"><svg width="20" height="20"><rect x="4" y="4" width="11" height="11" fill="#7d8186" stroke="#333" />{corner}</svg></ToolButton>
                <ToolRule $h={4} />
                <ToolButton $on aria-label="屏幕模式"><svg width="20" height="20"><rect x="4.500" y="4.500" width="11" height="11" rx="2" fill="#ddd" stroke={S} strokeWidth="1.500" /><path d="M7 8H13V12H7ZM8 9L12 12" fill="none" stroke={S} />{corner}</svg></ToolButton>
              </ToolList>
            </Toolbox>

            <Doc>
              <TabStrip>
                <DocTab><span><Mixed text="*未命名-1 @ 25%" /></span><svg width="7" height="7"><path d="M1 1L6 6M6 1L1 6" stroke={S} strokeWidth="1.500" /></svg></DocTab>
              </TabStrip>
              <RulerRow><TopRuler /></RulerRow>
              <CanvasRow>
                <SideRuler />
                <Canvas><Spreads /></Canvas>
                <VScroll><ScrollButton aria-label="向下滚动"><Chevron /></ScrollButton></VScroll>
              </CanvasRow>
              <Status>
                <Nav aria-label="首页"><svg width="7" height="7"><path d="M1 0V7" stroke="#222" strokeWidth="2" /><path d="M7 0V7L2 3.500Z" fill="#222" /></svg></Nav>
                <Nav aria-label="上一页"><svg width="5" height="7"><path d="M5 0V7L0 3.500Z" fill="#222" /></svg></Nav>
                <Select w={98} h={15} value="2" label="页码" plain />
                <Nav aria-label="下一页"><svg width="5" height="7"><path d="M0 0V7L5 3.500Z" fill="#222" /></svg></Nav>
                <Nav aria-label="末页"><svg width="7" height="7"><path d="M6 0V7" stroke="#222" strokeWidth="2" /><path d="M0 0V7L5 3.500Z" fill="#222" /></svg></Nav>
                <Nav $w={29} aria-label="打开"><svg width="14" height="13"><circle cx="6" cy="6" r="5" fill="#b5b6b5" stroke="#666" strokeWidth="1.500" /><path d="M4 4H7L9 6V9H4Z" fill="#eee" stroke="#555" /><path d="M14 13V10L11 13Z" fill="#111" /></svg></Nav>
                <Preflight><svg width="11" height="11"><circle cx="5.500" cy="5.500" r="5.500" fill="#379b2d" /><circle cx="5" cy="4" r="2.500" fill="#5cba50" /></svg><span>无错误</span><Down w={6} /></Preflight>
                <ScrollButton $off $w={15} aria-label="向左滚动"><svg width="6" height="9"><path d="M5 1L1.500 4.500L5 8" fill="none" stroke="#c8c7bc" strokeWidth="2" /></svg></ScrollButton>
                <HTrack />
                <ScrollButton $off $w={15} aria-label="向右滚动"><svg width="6" height="9"><path d="M1 1L4.500 4.500L1 8" fill="none" stroke="#c8c7bc" strokeWidth="2" /></svg></ScrollButton>
                <svg width="34" height="15"><rect x="2" y="2" width="6" height="11" fill="#8b8d93" /><rect x="10" y="2" width="6" height="11" fill="#8b8d93" /><path d="M29 4V13M26 7V13M23 10V13M20 12V13" stroke="#98978a" strokeWidth="2" strokeDasharray="1 1" /></svg>
              </Status>

              <PagesPanel>
                <PanelTabs>
                  <PanelTab $on><svg width="6" height="9"><path d="M1 3.500L3 1L5 3.500M1 5.500L3 8L5 5.500" fill="none" stroke={S} /></svg>页面</PanelTab>
                  <PanelTab>图层</PanelTab>
                  <PanelTab>色板</PanelTab>
                  <TabTools><Twin /><TinyRule /><svg width="14" height="9"><path d="M0 2H5L2.500 5Z" fill={S} /><path d="M6 1.500H14M6 4H14M6 6.500H14M6 8.500H14" stroke={S} /></svg></TabTools>
                </PanelTabs>
                <ScrollRow>
                  <Masters>
                    <MasterRow><span><Mixed text="[无]" /></span><svg width="17" height="24"><rect x="0.500" y="0.500" width="16" height="23" fill="#fff" stroke="#222" /></svg></MasterRow>
                    <MasterRow><span><Mixed text="A-主页" /></span><svg width="33" height="24"><rect x="0.500" y="0.500" width="32" height="23" fill="#fff" stroke="#222" /><path d="M16.500 0V24" stroke="#222" /><rect x="5" y="8" width="5" height="4" fill="#666" /><rect x="21" y="7" width="4" height="4" fill="#666" /></svg></MasterRow>
                  </Masters>
                  <PanelScroll>
                    <ScrollButton $off aria-label="主页上滚"><Chevron up c="#c8c7bc" /></ScrollButton>
                    <ScrollButton $off aria-label="主页下滚"><Chevron c="#c8c7bc" /></ScrollButton>
                  </PanelScroll>
                </ScrollRow>
                <SizeBar>
                  <svg width="6" height="14"><path d="M0 2.500H6M0 5.500H6M0 8.500H6M0 11.500H6" stroke="#b9b8a9" /></svg>
                  <SizeButton><Latin>A4 V</Latin><Down w={5} /></SizeButton>
                </SizeBar>
                <ScrollRow>
                  <PageList>
                    {pageBlocks.map((b, i) => (
                      <PageBlock key={b.label} $first={i === 0}>
                        <svg width="52" height={i === 0 ? 40 : 47} viewBox={i === 0 ? "0 7 52 40" : "0 0 52 47"}>
                          {b.art}
                          <path d="M25.500 0V47" stroke="#111" />
                        </svg>
                        <PageLabel $side={b.side} $on={b.label === "[4-5]"}>{b.label}</PageLabel>
                      </PageBlock>
                    ))}
                  </PageList>
                  <PanelScroll>
                    <ScrollButton aria-label="页面上滚"><Chevron up /></ScrollButton>
                    <Thumb><svg width="6" height="8"><path d="M0 1.500H6M0 4.500H6M0 7.500H6" stroke="#e7effc" /></svg></Thumb>
                    <ScrollButton aria-label="页面下滚"><Chevron /></ScrollButton>
                  </PanelScroll>
                </ScrollRow>
                <PanelFoot>
                  <span><Mixed text="10 页, 6 个跨页" /></span>
                  <svg width="18" height="12"><path d="M1 5H6V10H1ZM4 1H10L13 4V10H4Z" fill="#fff" stroke={S} /><path d="M14 8H18L16 11Z" fill="#222" /></svg>
                  <svg width="10" height="11"><path d="M0.500 0.500H9.500V10H0.500Z" fill="#eee" stroke={S} /><path d="M5 5H9V10H5Z" fill={S} /></svg>
                  <svg width="10" height="11"><path d="M0 2.500H10M3 2V0.500H7V2" fill="none" stroke={S} strokeWidth="1.500" /><path d="M1.500 4H8.500L8 11H2Z" fill={S} /><path d="M4 5V10M6 5V10" stroke="#ddd" /></svg>
                  <svg width="10" height="11"><path d="M9 1V10M7 3V10M5 5V10M3 7V10M1 9V10" stroke="#98978a" strokeDasharray="1 1" /></svg>
                </PanelFoot>
                <PanelBase><Grip /></PanelBase>
              </PagesPanel>
            </Doc>

            <Dock>
              <ColumnHead $right><Twin left /></ColumnHead>
              {dock.map((g, gi) => (
                <DockGroup key={gi}>
                  <DockGrip><Grip /></DockGrip>
                  {g.map((d, i) => (
                    <DockItem key={d.t} $on={gi === 0 && i === 0}>
                      <svg width="18" height="18">{d.art}</svg>
                      <span><Mixed text={d.t} /></span>
                    </DockItem>
                  ))}
                </DockGroup>
              ))}
            </Dock>
          </Body>

          <Control>
            <svg width="49" height="30">
              <defs>
                <linearGradient id="gh"><stop stopColor="#3c3f42" /><stop offset="1" stopColor="#f0f0ee" /></linearGradient>
                <linearGradient id="gd" x2="1" y2="1"><stop stopColor="#f6f6f4" /><stop offset="1" stopColor="#35383a" /></linearGradient>
                <linearGradient id="gv" x2="0" y2="1"><stop stopColor="#e8e8e5" /><stop offset="1" stopColor="#3c3f42" /></linearGradient>
              </defs>
              <path d="M5.500 5V25" stroke="#85857c" strokeWidth="3" strokeDasharray="1 1" />
              <g fill="#fff" stroke="#333"><path d="M23 8H37M23 15H37M23 22H37M23 8V22M30 8V22M37 8V22" />
                {[8, 15, 22].map((y) => [23, 30, 37].map((x) => <rect key={`${x}-${y}`} x={x - 2.5} y={y - 2.5} width="5" height="5" fill={x === 30 && y === 15 ? "#222" : "#fff"} />))}
              </g>
            </svg>
            <Pairs>
              <NumField id="fx" label="X:" value="148.5 毫米" off />
              <NumField id="fy" label="Y:" value="148.5 毫米" />
            </Pairs>
            <Pairs>
              <NumField id="fw" label="W:" value="210 毫米" />
              <NumField id="fh" label="H:" value="297 毫米" />
            </Pairs>
            <TopSelect><Select w={130} h={19} value="A4" label="页面大小" /></TopSelect>
            <Orient $on aria-label="纵向"><svg width="14" height="16"><path d="M1.500 0.500H9L12.500 4V15.500H1.500Z" fill="#ddd" stroke="#222" /><circle cx="7" cy="5" r="1.500" fill="#fff" stroke="#222" /><path d="M4 7.500H10V10.500H8.500V14H5.500V10.500H4Z" fill="#fff" stroke="#222" /></svg></Orient>
            <Orient aria-label="横向"><svg width="14" height="16"><path d="M1.500 0.500H9L12.500 4V15.500H1.500Z" fill="#ddd" stroke="#222" /><circle cx="4.500" cy="9" r="1.500" fill="#fff" stroke="#222" /><path d="M6.500 6H9.500V7.500H12V10.500H9.500V12H6.500Z" fill="#fff" stroke="#222" /></svg></Orient>
            <PanelRule $gap />
            <Rules>
              <span><Mixed text="自适应页面规则:" /></span>
              <Select w={152} h={19} value="关" label="自适应页面规则" />
            </Rules>
            <PanelRule />
            <Checks>
              <Check><input type="checkbox" />对象随页面移动</Check>
              <Check><input type="checkbox" />显示主页叠加</Check>
            </Checks>
            <PanelRule />
            <Spacer />
            <svg width="20" height="20"><path d="M9 1L1 12H6L3 19L12 8H7.500L11 1Z" fill={S} /></svg>
            <PanelRule />
            <svg width="24" height="12"><path d="M5 3H10L7.500 6Z" fill="#222" /><path d="M12 2.500H19M12 5.500H19M12 8.500H19" stroke="#222" /></svg>
          </Control>
        </Shell>
        <EdgeRight><EdgeMore>»</EdgeMore><EdgeArrow>▲</EdgeArrow><EdgeThumb /></EdgeRight>
      </Middle>
      <Badge>63</Badge>

      <Notes width="1180" height="860" fill="none">
        <g stroke={RED}>
          <path d="M11 107C25 104 45 101 53 107C60 113 59 128 53 137C47 145 33 146 22 141C11 135 6 124 9 117C12 111 18 110 26 110" strokeWidth="1.200" />
          <path d="M63 133L92 134.500" strokeWidth="4" />
          <path d="M90 125L108 134.500L90 143Z" fill={RED} stroke="none" />
          <path d="M124 105L126 171" strokeWidth="7" />
          <path d="M689 112C698 104 712 109 718 116C724 124 714 127 696 128C712 132 722 136 718 142C714 148 704 147 691 146" strokeWidth="7" />
          <path d="M356 737C357 720 372 709 392 709C412 708 424 724 419 745C413 764 376 764 368 771C364 778 388 776 452 774" strokeWidth="6" />
        </g>
        <text x="458" y="831" fontFamily={SANS} fontSize="48" fill={RED}>选中页面</text>
        <path d="M962.500 56V272M962.500 328V560M962 56.500H1113M962 170C958 120 958 70 973 56L992 72M988 62C996 51 1019 50 1025 62C1027 72 1020 76 1027 66M1035 74C1040 64 1042 58 1050 57" stroke="#3b3d41" />
      </Notes>
    </Desktop>
  );
}
